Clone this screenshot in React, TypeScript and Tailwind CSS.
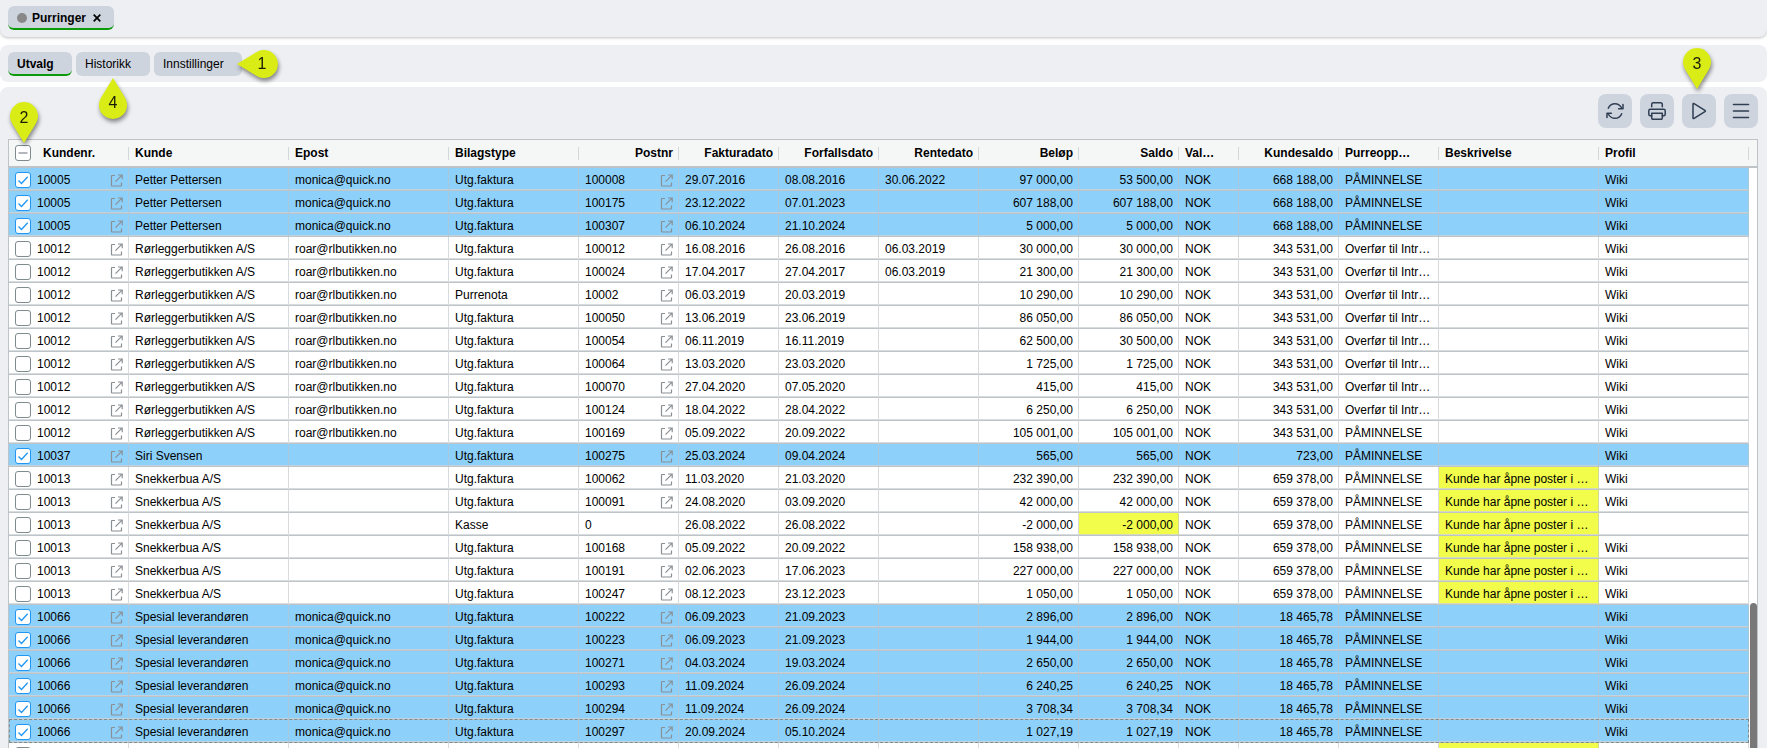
import React, { useState } from 'react';
import clsx from 'clsx';

interface Entry {
  kundenr: string;
  kunde: string;
  epost: string;
  type: string;
  postnr: string;
  faktura: string;
  forfall: string;
  rente: string;
  belop: string;
  saldo: string;
  kundesaldo: string;
  oppsett: string;
  beskrivelse: string;
  profil: string;
}

interface Column {
  title: string;
  width: string;
  right?: boolean;
}

const columns: Column[] = [
  { title: 'Kundenr.', width: 'w-[120px]' },
  { title: 'Kunde', width: 'w-[160px]' },
  { title: 'Epost', width: 'w-[160px]' },
  { title: 'Bilagstype', width: 'w-[130px]' },
  { title: 'Postnr', width: 'w-[100px]', right: true },
  { title: 'Fakturadato', width: 'w-[100px]', right: true },
  { title: 'Forfallsdato', width: 'w-[100px]', right: true },
  { title: 'Rentedato', width: 'w-[100px]', right: true },
  { title: 'Beløp', width: 'w-[100px]', right: true },
  { title: 'Saldo', width: 'w-[100px]', right: true },
  { title: 'Val…', width: 'w-[60px]' },
  { title: 'Kundesaldo', width: 'w-[100px]', right: true },
  { title: 'Purreopp…', width: 'w-[100px]' },
  { title: 'Beskrivelse', width: 'w-[160px]' },
  { title: 'Profil', width: 'w-auto' },
];

const P = 'PÅMINNELSE';
const O = 'Overfør til Intr…';
const NOTE = 'Kunde har åpne poster i …';

const customers: { [key: string]: string[] } = {
  '10005': ['Petter Pettersen', 'monica@quick.no', '668 188,00'],
  '10012': ['Rørleggerbutikken A/S', 'roar@rlbutikken.no', '343 531,00'],
  '10037': ['Siri Svensen', '', '723,00'],
  '10013': ['Snekkerbua A/S', '', '659 378,00'],
  '10066': ['Spesial leverandøren', 'monica@quick.no', '18 465,78'],
};

// kundenr, postnr, fakturadato, forfallsdato, rentedato, beløp, saldo, oppsett, type
const data: string[][] = [
  ['10005', '100008', '29.07.2016', '08.08.2016', '30.06.2022', '97 000,00', '53 500,00', P],
  ['10005', '100175', '23.12.2022', '07.01.2023', '', '607 188,00', '607 188,00', P],
  ['10005', '100307', '06.10.2024', '21.10.2024', '', '5 000,00', '5 000,00', P],
  ['10012', '100012', '16.08.2016', '26.08.2016', '06.03.2019', '30 000,00', '30 000,00', O],
  ['10012', '100024', '17.04.2017', '27.04.2017', '06.03.2019', '21 300,00', '21 300,00', O],
  ['10012', '10002', '06.03.2019', '20.03.2019', '', '10 290,00', '10 290,00', O, 'Purrenota'],
  ['10012', '100050', '13.06.2019', '23.06.2019', '', '86 050,00', '86 050,00', O],
  ['10012', '100054', '06.11.2019', '16.11.2019', '', '62 500,00', '30 500,00', O],
  ['10012', '100064', '13.03.2020', '23.03.2020', '', '1 725,00', '1 725,00', O],
  ['10012', '100070', '27.04.2020', '07.05.2020', '', '415,00', '415,00', O],
  ['10012', '100124', '18.04.2022', '28.04.2022', '', '6 250,00', '6 250,00', O],
  ['10012', '100169', '05.09.2022', '20.09.2022', '', '105 001,00', '105 001,00', P],
  ['10037', '100275', '25.03.2024', '09.04.2024', '', '565,00', '565,00', P],
  ['10013', '100062', '11.03.2020', '21.03.2020', '', '232 390,00', '232 390,00', P],
  ['10013', '100091', '24.08.2020', '03.09.2020', '', '42 000,00', '42 000,00', P],
  ['10013', '0', '26.08.2022', '26.08.2022', '', '-2 000,00', '-2 000,00', P, 'Kasse'],
  ['10013', '100168', '05.09.2022', '20.09.2022', '', '158 938,00', '158 938,00', P],
  ['10013', '100191', '02.06.2023', '17.06.2023', '', '227 000,00', '227 000,00', P],
  ['10013', '100247', '08.12.2023', '23.12.2023', '', '1 050,00', '1 050,00', P],
  ['10066', '100222', '06.09.2023', '21.09.2023', '', '2 896,00', '2 896,00', P],
  ['10066', '100223', '06.09.2023', '21.09.2023', '', '1 944,00', '1 944,00', P],
  ['10066', '100271', '04.03.2024', '19.03.2024', '', '2 650,00', '2 650,00', P],
  ['10066', '100293', '11.09.2024', '26.09.2024', '', '6 240,25', '6 240,25', P],
  ['10066', '100294', '11.09.2024', '26.09.2024', '', '3 708,34', '3 708,34', P],
  ['10066', '100297', '20.09.2024', '05.10.2024', '', '1 027,19', '1 027,19', P],
];

const entries: Entry[] = data.map((d) => ({
  kundenr: d[0],
  kunde: customers[d[0]][0],
  epost: customers[d[0]][1],
  type: d[8] || 'Utg.faktura',
  postnr: d[1],
  faktura: d[2],
  forfall: d[3],
  rente: d[4],
  belop: d[5],
  saldo: d[6],
  kundesaldo: customers[d[0]][2],
  oppsett: d[7],
  beskrivelse: d[0] === '10013' ? NOTE : '',
  profil: d[1] === '0' ? '' : 'Wiki',
}));

const FOCUSED_ROW = 24;

function OpenIcon() {
  return (
    <svg className="block size-[13px]" viewBox="0 0 13 13" fill="none" stroke="#8a8f94" strokeWidth="1.2">
      <path d="M5 1.500H2Q1.500 1.500 1.500 2V11.500Q1.500 12 2 12H11Q11.500 12 11.500 11.500V8.500" />
      <path d="M8 1H12.200V5.200M12 1.200L5.500 7.700" />
    </svg>
  );
}

function OpenLink({ label }: { label: string }) {
  return (
    <a href="#" aria-label={label} className="ml-auto">
      <OpenIcon />
    </a>
  );
}

function RefreshIcon() {
  return (
    <svg className="size-[18px]" viewBox="0 0 18 18" fill="none" stroke="#2f3e52" strokeWidth="1.5" strokeLinecap="round" strokeLinejoin="round">
      <path d="M2.300 6.300C3.500 3.400 6 1.700 9 1.700C11.800 1.700 14.200 3.200 15.800 6" />
      <path d="M17 2.500V6.700H12.600" />
      <path d="M15.700 11.700C14.500 14.600 12 16.300 9 16.300C6.200 16.300 3.800 14.800 2.200 12" />
      <path d="M1 15.500V11.300H5.400" />
    </svg>
  );
}

function PrintIcon() {
  return (
    <svg className="size-[18px]" viewBox="0 0 18 18" fill="none" stroke="#2f3e52" strokeWidth="1.5" strokeLinecap="round" strokeLinejoin="round">
      <path d="M3.700 4.700V2.300A1.500 1.500 0 0 1 5.200 .8H12.800A1.500 1.500 0 0 1 14.300 2.300V4.700" />
      <path d="M3.700 13.700H2.300A1.500 1.500 0 0 1 .8 12.200V8.700A1.500 1.500 0 0 1 2.300 7.200H15.700A1.500 1.500 0 0 1 17.200 8.700V12.200A1.500 1.500 0 0 1 15.700 13.700H14.300" />
      <path d="M3.700 11.200H14.300V16A1.200 1.200 0 0 1 13.100 17.200H4.900A1.200 1.200 0 0 1 3.700 16Z" />
    </svg>
  );
}

function PlayIcon() {
  return (
    <svg className="size-[18px]" viewBox="0 0 18 18" fill="none" stroke="#2f3e52" strokeWidth="1.5" strokeLinejoin="round">
      <path d="M3 2.200C3 1.400 3.500 1.200 4.100 1.600L14.900 8.300C15.500 8.700 15.500 9.300 14.900 9.700L4.100 16.400C3.500 16.800 3 16.600 3 15.800Z" />
    </svg>
  );
}

function BarsIcon() {
  return (
    <svg className="size-[18px]" viewBox="0 0 18 18" fill="none" stroke="#2f3e52" strokeWidth="1.6" strokeLinecap="round">
      <path d="M1.500 2.500H16.500M1.500 9H16.500M1.500 15.500H16.500" />
    </svg>
  );
}

type PinDirection = 'down' | 'up' | 'left';

const pinTransforms = {
  down: 'translate(14 14)',
  up: 'translate(14 27) rotate(180)',
  left: 'translate(27 14) rotate(90)',
};

function Pin({ n, direction, className }: { n: number; direction: PinDirection; className: string }) {
  const left = direction === 'left';
  return (
    <span
      className={clsx(
        'pointer-events-none absolute z-10 flex text-[#1a1d08] drop-shadow-[1px_3px_2px_rgba(0,0,0,0.45)]',
        left ? 'h-[28px] w-[41px] justify-end' : 'h-[41px] w-[28px]',
        direction === 'up' && 'items-end',
        className
      )}
    >
      <svg className="absolute inset-0 size-full" viewBox={left ? '0 0 41 28' : '0 0 28 41'}>
        <path d="M0 27L-12 7.300A14 14 0 1 1 12 7.300Z" fill="#d9ec16" transform={pinTransforms[direction]} />
      </svg>
      <span
        className={clsx(
          'relative flex items-center justify-center text-base leading-4 font-normal',
          left ? 'h-7 w-8' : 'h-8 w-7'
        )}
      >
        {n}
      </span>
    </span>
  );
}

interface CheckProps {
  label: string;
  checked: boolean;
  partial?: boolean;
  onChange: () => void;
}

function Check({ label, checked, partial, onChange }: CheckProps) {
  return (
    <span className="relative size-4 shrink-0">
      <input
        type="checkbox"
        aria-label={label}
        checked={checked}
        onChange={onChange}
        className="block size-4 appearance-none rounded-[3px] border border-[#7f8c8d] bg-white checked:border-[#2196f3]"
      />
      {(checked || partial) && (
        <svg className="pointer-events-none absolute inset-0 size-4" viewBox="0 0 16 16" fill="none">
          {checked ? (
            <path d="M3.500 8.500L6.500 11.500L12.700 4.800" stroke="#2196f3" strokeWidth="1.3" />
          ) : (
            <path d="M3.500 8H12.500" stroke="#a0a6ab" strokeWidth="1.6" />
          )}
        </svg>
      )}
    </span>
  );
}

function ToolButton({ label, children }: { label: string; children: React.ReactNode }) {
  return (
    <button
      aria-label={label}
      className="relative flex size-[34px] items-center justify-center rounded-lg bg-[#ced4de]"
    >
      {children}
    </button>
  );
}

function Cell({ children, right, yellow }: { children?: React.ReactNode; right?: boolean; yellow?: boolean }) {
  return (
    <td
      className={clsx(
        'h-[23px] border-r border-b border-r-[#bdc3c7]/60 border-b-[#bdc3c7] p-0 shadow-[inset_0_-1px_0_rgba(205,211,215,0.8)]',
        yellow && 'bg-[#f1fc4b]'
      )}
    >
      <div
        className={clsx(
          'flex h-[22px] items-center overflow-hidden pt-0.5 pr-[5px] pl-[6px] whitespace-nowrap',
          right && 'justify-end'
        )}
      >
        {children}
      </div>
    </td>
  );
}

export default function App() {
  const [selected, setSelected] = useState<boolean[]>(
    entries.map((e) => ['10005', '10037', '10066'].includes(e.kundenr))
  );

  const all = selected.every(Boolean);

  const toggle = (index: number) => {
    setSelected(selected.map((s, i) => (i === index ? !s : s)));
  };

  return (
    <div className="flex h-screen flex-col overflow-hidden bg-white font-['Liberation_Sans',Arial,sans-serif] text-xs text-black">
      <header className="z-10 mb-2 rounded-b-lg bg-[#eeeff3] px-2 pt-[6px] pb-[7px] shadow-[0_1px_3px_rgba(0,0,0,0.25)]">
        <div className="flex h-6 w-fit items-center rounded-md border-b-2 border-[#0a9a0a] bg-[#ced4de] pt-0.5 pr-[13px] pl-[9px] font-bold">
          <span className="mr-[5px] size-[10px] rounded-full bg-[#888888]" />
          Purringer
          <button aria-label="Lukk" className="ml-[7px]">
            <svg className="block size-2" viewBox="0 0 8 8" stroke="#000" strokeWidth="1.7">
              <path d="M.7 .7L7.300 7.300M7.300 .7L.7 7.300" />
            </svg>
          </button>
        </div>
      </header>

      <nav className="mb-[5px] flex gap-1 rounded-lg bg-[#eeeff3] px-2 pt-[7px] pb-[6px]">
        <button className="h-6 w-16 rounded-md border-b-2 border-[#0a9a0a] bg-[#ced4de] pt-0.5 pl-[9px] text-left font-bold">
          Utvalg
        </button>
        <button className="relative h-6 w-[74px] rounded-md bg-[#ced4de] pl-[9px] text-left">
          Historikk
          <Pin n={4} direction="up" className="top-[26px] left-[23px]" />
        </button>
        <button className="relative h-6 w-[88px] rounded-md bg-[#ced4de] pl-[9px] text-left">
          Innstillinger
          <Pin n={1} direction="left" className="-top-[2px] left-[83px]" />
        </button>
      </nav>

      <main className="flex min-h-0 flex-1 flex-col rounded-t-lg bg-[#eeeff3] pr-[9px] pl-2">
        <div className="flex justify-end gap-2 pt-[7px] pb-[11px]">
          <ToolButton label="Oppdater">
            <RefreshIcon />
          </ToolButton>
          <ToolButton label="Skriv ut">
            <PrintIcon />
          </ToolButton>
          <ToolButton label="Kjør">
            <PlayIcon />
            <Pin n={3} direction="down" className="-top-[46px] left-px" />
          </ToolButton>
          <ToolButton label="Meny">
            <BarsIcon />
          </ToolButton>
        </div>

        <div className="relative min-h-0 flex-1 border border-b-0 border-[#bdc3c7] bg-white">
          <Pin n={2} direction="down" className="-top-[38px] left-px" />
          <div className="h-full overflow-hidden">
            <table className="w-full table-fixed border-separate border-spacing-0">
              <thead>
                <tr>
                  {columns.map((col, i) => (
                    <th key={col.title} className={clsx('h-[28px] border-b-2 border-[#bdc3c7] bg-[#f5f7f7] p-0', col.width)}>
                      <div
                        className={clsx(
                          'flex h-[13px] items-center border-r border-[#bdc3c7]/60 pr-[5px] pl-[6px] leading-4 whitespace-nowrap',
                          col.right && 'justify-end'
                        )}
                      >
                        {i === 0 && (
                          <span className="mr-3 flex">
                            <Check
                              label="Velg alle"
                              checked={all}
                              partial={selected.some(Boolean)}
                              onChange={() => setSelected(selected.map(() => !all))}
                            />
                          </span>
                        )}
                        {col.title}
                      </div>
                    </th>
                  ))}
                  <td className="h-[28px] w-2 border-b-2 border-[#bdc3c7] bg-[#f5f7f7] p-0" />
                </tr>
              </thead>
              <tbody>
                {entries.map((e, i) => (
                  <tr key={i} className={clsx('relative', selected[i] && 'bg-[#8dd0fa]')}>
                    <Cell>
                      <span className="mr-[6px] flex">
                        <Check label={`Velg ${e.kundenr}`} checked={selected[i]} onChange={() => toggle(i)} />
                      </span>
                      {e.kundenr}
                      <OpenLink label="Åpne kunde" />
                    </Cell>
                    <Cell>{e.kunde}</Cell>
                    <Cell>{e.epost}</Cell>
                    <Cell>{e.type}</Cell>
                    <Cell>
                      {e.postnr}
                      {e.postnr !== '0' && <OpenLink label="Åpne post" />}
                    </Cell>
                    <Cell>{e.faktura}</Cell>
                    <Cell>{e.forfall}</Cell>
                    <Cell>{e.rente}</Cell>
                    <Cell right>{e.belop}</Cell>
                    <Cell right yellow={e.saldo.startsWith('-')}>
                      {e.saldo}
                    </Cell>
                    <Cell>NOK</Cell>
                    <Cell right>{e.kundesaldo}</Cell>
                    <Cell>{e.oppsett}</Cell>
                    <Cell yellow={e.beskrivelse !== ''}>{e.beskrivelse}</Cell>
                    <Cell>{e.profil}</Cell>
                    <td className="bg-white p-0">
                      {i === FOCUSED_ROW && (
                        <div className="pointer-events-none absolute -top-px right-2 bottom-0 left-0 border border-dashed border-[#7f8c8d]" />
                      )}
                    </td>
                  </tr>
                ))}
                <tr>
                  <Cell>
                    <Check label="Velg" checked={false} onChange={() => {}} />
                  </Cell>
                  {columns.slice(1).map((col) => (
                    <Cell key={col.title} yellow={col.title === 'Beskrivelse'} />
                  ))}
                  <td className="p-0" />
                </tr>
              </tbody>
            </table>
          </div>
          <div className="absolute top-[463px] right-0 bottom-0 w-[7px] rounded-t-full bg-[#787878]" />
        </div>
      </main>
    </div>
  );
}
